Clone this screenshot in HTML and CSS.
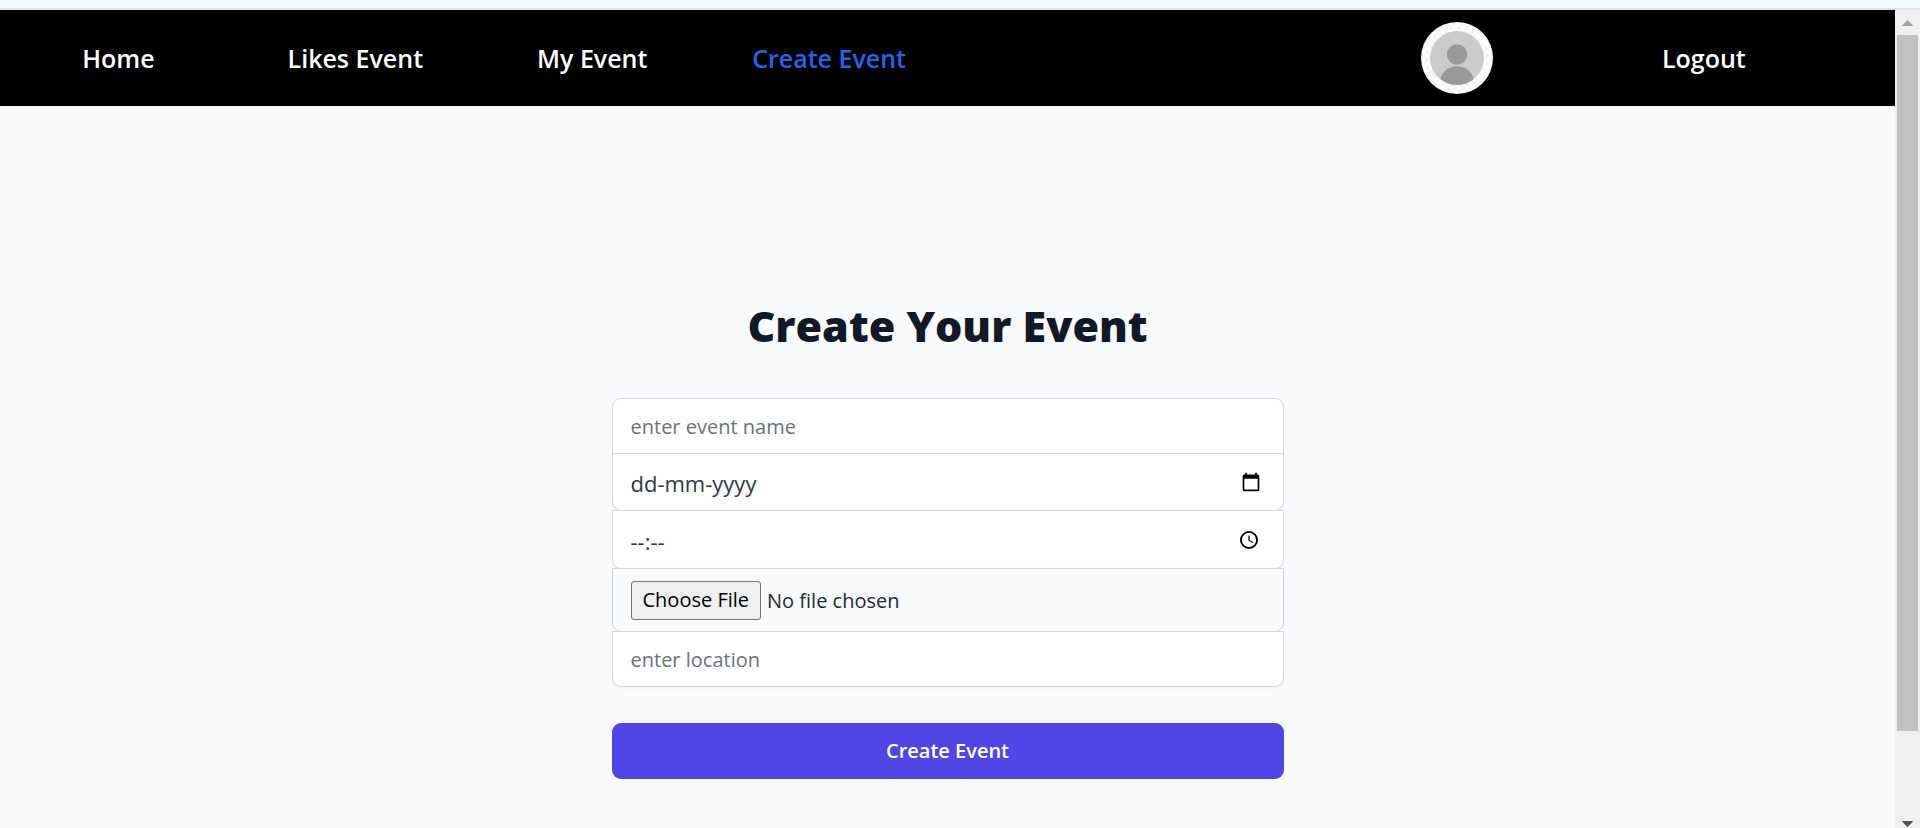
FILE: index.html
```html
<!DOCTYPE html>
<html lang="en">
<head>
<meta charset="utf-8">
<title>Create Event</title>
<link rel="stylesheet" href="styles.css">
</head>
<body>
<div class="top-strip"></div>
<div class="viewport">
  <div class="page">
    <header class="navbar">
      <nav class="nav-links">
        <a href="#home">Home</a>
        <a href="#likes">Likes Event</a>
        <a href="#mine">My Event</a>
        <a href="#create" class="active">Create Event</a>
      </nav>
      <div class="account">
        <a href="#profile" aria-label="Profile">
          <svg class="avatar" viewBox="0 0 72 72">
            <defs>
              <pattern id="checks" width="8" height="8" patternUnits="userSpaceOnUse">
                <rect width="8" height="8" fill="#fff"/>
                <rect width="4" height="4" fill="#f5f5f5"/>
                <rect x="4" y="4" width="4" height="4" fill="#f5f5f5"/>
              </pattern>
              <clipPath id="disc"><circle cx="36" cy="36" r="27"/></clipPath>
            </defs>
            <circle cx="36" cy="36" r="36" fill="url(#checks)"/>
            <circle cx="36" cy="36" r="27" fill="#cbcbcb"/>
            <circle cx="36" cy="32.5" r="10.2" fill="#999"/>
            <ellipse cx="36" cy="60" rx="17" ry="15.7" fill="#999" clip-path="url(#disc)"/>
          </svg>
        </a>
        <a href="#logout">Logout</a>
      </div>
    </header>
    <main class="content">
      <h1>Create Your Event</h1>
      <form class="event-form">
        <div class="fields">
          <div class="field first">
            <input type="text" aria-label="Event name" placeholder="enter event name">
          </div>
          <div class="field date">
            <input type="text" aria-label="Event date" placeholder="dd-mm-yyyy">
            <button type="button" class="picker" aria-label="Pick a date">
              <svg viewBox="0 0 24 24"><path d="M20 3h-1V1h-2v2H7V1H5v2H4c-1.100 0-2 .9-2 2v16c0 1.100.9 2 2 2h16c1.100 0 2-.9 2-2V5c0-1.100-.9-2-2-2zm0 18H4V8h16v13z"/></svg>
            </button>
          </div>
          <div class="field time">
            <input type="text" aria-label="Event time" placeholder="--:--">
            <button type="button" class="picker" aria-label="Pick a time">
              <svg viewBox="0 0 24 24"><circle cx="12" cy="12" r="9.700" fill="none" stroke="#000" stroke-width="2.200"/><path d="M11.300 6.500v6.200l4.800 3 .8-1.300-4.100-2.500V6.500z"/></svg>
            </button>
          </div>
          <div class="field file">
            <input type="file" aria-label="Event image">
          </div>
          <div class="field last">
            <input type="text" aria-label="Location" placeholder="enter location">
          </div>
        </div>
        <button type="submit" class="submit">Create Event</button>
      </form>
    </main>
  </div>
  <div class="scrollbar" aria-hidden="true">
    <svg class="arrow-up" viewBox="0 0 25 25"><path d="M12.500 10 18.500 16h-12z" fill="#a3a3a3"/></svg>
    <div class="thumb"></div>
    <div class="track"></div>
    <svg class="arrow-down" viewBox="0 0 25 17"><path d="M12.500 16 18.500 10h-12z" fill="#505050"/></svg>
  </div>
</div>
</body>
</html>
```
FILE: styles.css
```css
* {
  box-sizing: border-box;
}

body {
  margin: 0;
  height: 100vh;
  display: flex;
  flex-direction: column;
  overflow: hidden;
  background: #f9fafc;
  color: #111827;
  font-family: "Segoe UI", "Open Sans", "Noto Sans", sans-serif;
}

.top-strip {
  flex: none;
  height: 10px;
  background: #f4fafd;
  border-bottom: 2px solid #dae5e8;
}

.viewport {
  flex: 1;
  min-height: 0;
  display: flex;
}

.page {
  flex: 1;
  min-width: 0;
}

.navbar {
  display: flex;
  align-items: center;
  padding: 12px 0;
  background: #000;
  font-size: 25px;
  font-weight: 600;
}

.navbar a {
  color: #fff;
  text-decoration: none;
}

.navbar .active {
  color: #2563eb;
}

.nav-links {
  width: 50%;
  display: grid;
  grid-template-columns: repeat(4, 1fr);
  text-align: center;
}

.account {
  width: 26%;
  margin-left: auto;
  margin-right: 68px;
  display: grid;
  grid-template-columns: 1fr 1fr;
  place-items: center;
}

.avatar {
  display: block;
  width: 72px;
  height: 72px;
}

.content {
  max-width: 672px;
  margin: 0 auto;
  padding-top: 192px;
}

h1 {
  margin: 0 0 44px;
  font-size: 43px;
  line-height: 56px;
  font-weight: 800;
  text-align: center;
}

.event-form {
  display: grid;
  gap: 36px;
}

.fields {
  display: flex;
  flex-direction: column;
}

.field {
  display: flex;
  align-items: center;
  height: 58px;
  margin-top: -1px;
  padding: 0 18px;
  border: 1px solid #d1d5db;
  border-radius: 0 0 9px 9px;
  background: #fff;
  box-shadow: 0 1px 3px rgba(0, 0, 0, 0.05);
}

.first {
  height: 56px;
  margin-top: 0;
  border-radius: 9px 9px 0 0;
}

.time {
  height: 59px;
}

.file {
  height: 64px;
  background: #f9fafc;
}

.last {
  height: 56px;
}

.field input {
  flex: 1;
  min-width: 0;
  padding: 2px 0 0;
  border: 0;
  outline: 0;
  background: none;
  color: #1f2937;
  font: 20px/30px "Segoe UI", "Open Sans", "Noto Sans", sans-serif;
}

.field input::placeholder {
  color: #6b7280;
  opacity: 1;
}

.date input,
.time input {
  font-size: 22px;
}

.date input::placeholder,
.time input::placeholder {
  color: #30384a;
}

.field input::file-selector-button {
  height: 39px;
  margin: 0 6px 0 0;
  padding: 0 11px;
  border: 1px solid #767676;
  border-radius: 3px;
  background: #efefef;
  color: #000;
  font: inherit;
}

.field input[type="file"] {
  padding: 0;
}

.picker {
  padding: 0 4px;
  border: 0;
  background: none;
}

.time .picker {
  padding-right: 6px;
}

.picker svg {
  display: block;
  width: 20px;
  height: 20px;
}

.submit {
  height: 56px;
  border: 0;
  border-radius: 9px;
  background: #4f46e5;
  color: #fff;
  font: 600 20px/30px "Segoe UI", "Open Sans", "Noto Sans", sans-serif;
}

.scrollbar {
  flex: none;
  width: 25px;
  display: flex;
  flex-direction: column;
  background: #f0f0f0;
}

.arrow-up {
  height: 25px;
}

.arrow-down {
  height: 17px;
}

.thumb {
  flex: 87;
  margin: 0 2px;
  background: #c1c1c1;
}

.track {
  flex: 10;
}
```
